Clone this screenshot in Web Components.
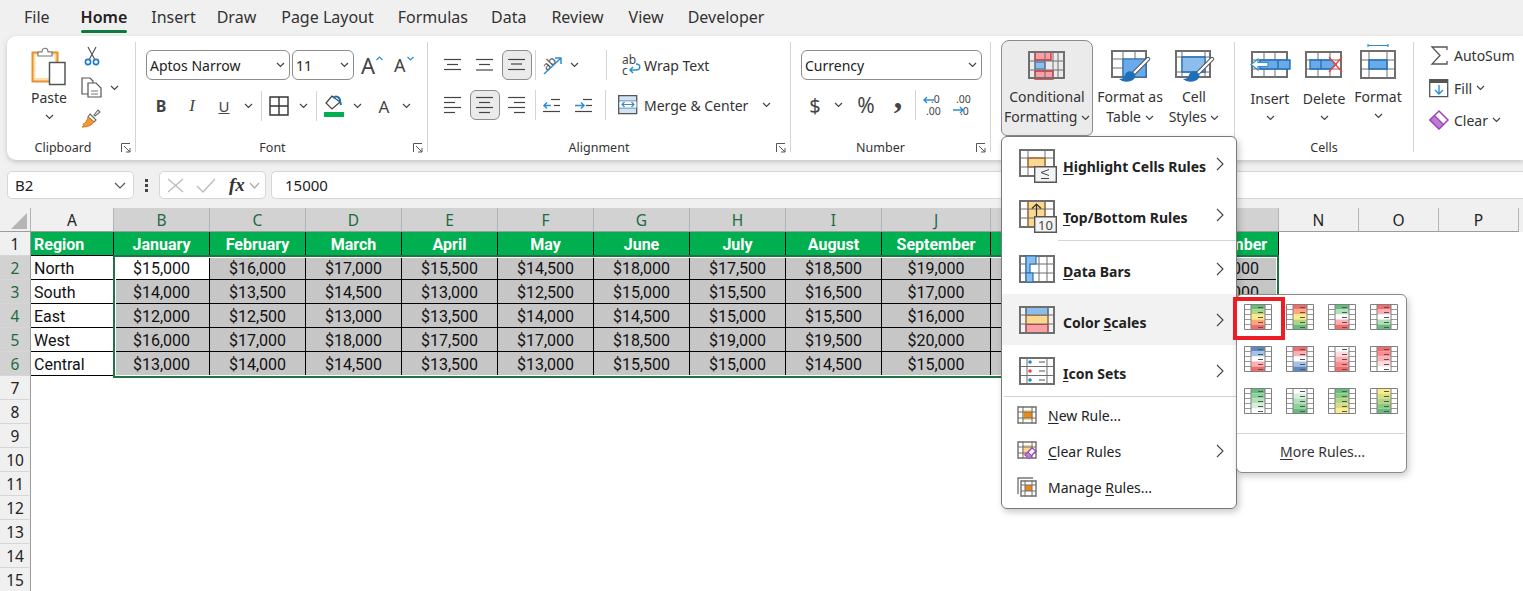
<!DOCTYPE html>
<html>
<head>
<meta charset="utf-8">
<title>Excel</title>
<style>
  html, body { margin: 0; padding: 0; }
  body {
    width: 1523px;
    height: 591px;
    overflow: hidden;
    position: relative;
    background: #f0f0f0;
    font-family: "Noto Sans", "Liberation Sans", sans-serif;
    color: #262626;
  }
</style>
</head>
<body>
<ribbon-tabs></ribbon-tabs>
<excel-ribbon></excel-ribbon>
<formula-bar></formula-bar>
<sheet-grid></sheet-grid>
<cf-menu></cf-menu>
<scale-menu></scale-menu>

<script>
const GR = '#6f6f6f';
const BL = '#1f6fb8';
const LB = '#8dbdec';

// draws a grey table: xs and ys are the line positions
function grid(xs, ys, sw = 2, col = GR) {
  const x0 = xs[0], x1 = xs[xs.length - 1], y0 = ys[0], y1 = ys[ys.length - 1];
  let s = '';
  xs.forEach(x => s += `<path d="M${x} ${y0-sw/2}V${y1+sw/2}" stroke="${col}" stroke-width="${x===x0||x===x1?sw:1}"/>`);
  ys.forEach(y => s += `<path d="M${x0} ${y}H${x1}" stroke="${col}" stroke-width="${y===y0||y===y1?sw:1}"/>`);
  return s;
}
function lines(rows, col = '#444') {
  return rows.map(r => `<path d="M${r[0]} ${r[2]}H${r[1]}" stroke="${col}" stroke-width="1.2"/>`).join('');
}
const BRUSH = `<path d="M37 9 23 23" stroke="#555" stroke-width="4.4" stroke-linecap="round"/><path d="M37 9 23 23" stroke="#fff" stroke-width="2.4" stroke-linecap="round"/>
  <path d="M22 22c-4-2-7 0-8 3-1 3-3 4-6 4 3 3 11 4 15 0 2-2 2-5-1-7z" fill="${BL}"/>`;
const ARROW_BLUE = '#2b8fd8';

const ICONS = {
  paste: [36, 40, `<path d="M1.5 6.500h25v29h-25z" fill="#fbdfae" stroke="#e8912d" stroke-width="2"/><path d="M4.500 9h19v23h-19z" fill="#fff"/>
    <path d="M7 10V6h4c0-5 6-5 6 0h4v4z" fill="#fff" stroke="#777" stroke-width="1.2"/>
    <path d="M18.500 16.500h15.500v22H18.500z" fill="#fff" stroke="#555" stroke-width="1.5"/>`],
  cut: [16, 20, `<path d="M4 1 10.500 13M12 1 5.500 13" stroke="#555" stroke-width="1.2" fill="none"/>
    <circle cx="4" cy="16" r="2.600" fill="none" stroke="#1f77c9" stroke-width="1.6"/><circle cx="12" cy="16" r="2.600" fill="none" stroke="#1f77c9" stroke-width="1.6"/>`],
  copy: [21, 21, `<path d="M1 1h8l3 3v13H1z" fill="#fff" stroke="#555" stroke-width="1.2"/>
    <path d="M7 6h8l5 5v9H7z" fill="#fff" stroke="#555" stroke-width="1.2"/><path d="M10 14h7M10 17h7" stroke="#777"/>`],
  painter: [20, 19, `<path d="M13 6 17 1l2 2-5 4z" fill="#fff" stroke="#666" stroke-width="1.1"/><path d="M9 5l6 6-2 2-6-5z" fill="#fff" stroke="#666" stroke-width="1.1"/>
    <path d="M7 8l6 5c-2 3-6 5-12 5 3-1 1-2 1-3 2 0 4-3 5-7z" fill="#f09a3a" stroke="#d9761a" stroke-width="1"/>`],
  borders: [20, 20, `<path d="M1 1h18v18H1zM10 1v18M1 10h18" fill="none" stroke="#333" stroke-width="1.4"/>`],
  fill: [21, 22, `<path d="M8 1 2 8l6 6 8-7z" fill="#fff" stroke="#444" stroke-width="1.2"/><path d="M9 3c3-3 7-1 7 3l1 4" fill="none" stroke="${BL}" stroke-width="2"/><path d="M0 17h20v5H0z" fill="#00b050"/>`],
  atop: [18, 14, lines([[0, 17, 1.5], [3, 14, 6.5], [0, 17, 11.5]])],
  amid: [18, 14, lines([[0, 17, 1.5], [3, 14, 6.5], [0, 17, 12]])],
  abot: [18, 14, lines([[0, 17, 1.5], [3, 14, 6], [0, 17, 11.5]])],
  aleft: [18, 18, lines([[0, 17, 1.5], [0, 11, 6.5], [0, 17, 11.5], [0, 11, 16.5]])],
  acenter: [18, 18, lines([[0, 17, 1.5], [3, 14, 6.5], [0, 17, 11.5], [3, 14, 16.5]])],
  aright: [18, 18, lines([[0, 17, 1.5], [6, 17, 6.5], [0, 17, 11.5], [6, 17, 16.5]])],
  orient: [22, 22, `<text x="2" y="14" transform="rotate(-45 8 11)" font-family="Noto Sans,sans-serif" font-size="12" fill="#444">ab</text><path d="M3 20 20 4M14 4h6v6" fill="none" stroke="${ARROW_BLUE}" stroke-width="1.5"/>`],
  outdent: [18, 15, lines([[8, 17, 1.5], [11, 17, 7.5], [0, 17, 13.5]]) + `<path d="M8 7.500H1M4 4.500l-3 3 3 3" fill="none" stroke="${ARROW_BLUE}" stroke-width="1.5"/>`],
  indent: [18, 15, lines([[8, 17, 1.5], [11, 17, 7.5], [0, 17, 13.5]]) + `<path d="M0 7.500h8M6 4.500l3 3-3 3" fill="none" stroke="${ARROW_BLUE}" stroke-width="1.5"/>`],
  wrap: [20, 22, `<text x="0" y="10" font-family="Noto Sans,sans-serif" font-size="12" fill="#444">ab</text><text x="0" y="21" font-family="Noto Sans,sans-serif" font-size="12" fill="#444">c</text>
    <path d="M8 16h6c5 0 5-6 0-6M11 13l-3 3 3 3" fill="none" stroke="${ARROW_BLUE}" stroke-width="1.5"/>`],
  merge: [20, 20, `<path d="M.7.7h18v18H.7z" fill="#cfe4f7" stroke="#555" stroke-width="1.3"/><path d="M1 6h18M1 13h18" stroke="#777"/><path d="M1.500 6.500h17v6h-17z" fill="#fff"/><path d="M4 9.500h12M6.500 7 4 9.500 6.500 12M13.500 7l2.500 2.500-2.500 2.500" fill="none" stroke="${ARROW_BLUE}" stroke-width="1.2"/>`],
  decinc: [20, 22, `<text x="8" y="9" font-family="Noto Sans,sans-serif" font-size="10.5" fill="#444">.0</text><text x="3" y="21" font-family="Noto Sans,sans-serif" font-size="10.5" fill="#444">.00</text><path d="M11 6H1M4 3 1 6l3 3" fill="none" stroke="${ARROW_BLUE}" stroke-width="1.4"/>`],
  decdec: [20, 22, `<text x="4" y="9" font-family="Noto Sans,sans-serif" font-size="10.5" fill="#444">.00</text><text x="8" y="21" font-family="Noto Sans,sans-serif" font-size="10.5" fill="#444">.0</text><path d="M1 16h10M8 13l3 3-3 3" fill="none" stroke="${ARROW_BLUE}" stroke-width="1.4"/>`],
  launcher: [10, 10, `<path d="M.5 9V.5H9" fill="none" stroke="#555"/><path d="M3 3l6 6M9 5v4H5" fill="none" stroke="#555"/>`],
  cf: [38, 30, `<path d="M7 2h16v8H7z" fill="#f9a0a6" stroke="#e2252b" stroke-width="1.3"/><path d="M7 12h10v7H7z" fill="${LB}" stroke="${BL}"/><path d="M7 21h18v8H7z" fill="#f9a0a6" stroke="#e2252b" stroke-width="1.3"/>` + grid([1, 7, 17, 25, 30, 36], [2, 11, 20, 28])],
  fat: [38, 34, grid([1, 12, 24, 35], [1, 9, 18, 27]) + `<path d="M12 9h23v18H12z" fill="#6aaae8" stroke="${BL}" stroke-width="1.2"/>` + BRUSH],
  cs: [38, 34, grid([1, 7, 30, 35], [1, 7, 22, 27]) + `<path d="M7 7h23v15H7z" fill="${LB}" stroke="${BL}" stroke-width="1.3"/>` + BRUSH],
  ins: [40, 28, grid([2, 14, 25, 37], [2, 10, 19, 27]) + `<path d="M10 10h30v9H10z" fill="#6aaae8" stroke="${BL}" stroke-width="1.4"/><path d="M28 10v9" stroke="${BL}" stroke-width="1.4"/><path d="M18 12.500H8V9L1 14.500 8 20v-3.500h10z" fill="#fff" stroke="${ARROW_BLUE}" stroke-width="1.2"/>`],
  del: [38, 28, grid([1, 13, 25, 36], [2, 10, 19, 27]) + `<path d="M5 10h21l5 4.500-5 4.500H5z" fill="#6aaae8" stroke="${BL}" stroke-width="1.3"/><path d="M16 10v9" stroke="${BL}" stroke-width="1.3"/><path d="M24 7l13 15M37 7 24 22" stroke="#f0453e" stroke-width="1.4"/>`],
  fmt: [36, 36, `<path d="M8 1v3M28 1v3M8 2.500h20" stroke="${ARROW_BLUE}" stroke-width="1.2"/>` + grid([1, 9, 27, 35], [8, 17, 26, 35]) + `<path d="M9 17h18v9H9z" fill="#6aaae8" stroke="${BL}" stroke-width="1.4"/>`],
  sigma: [17, 19, `<path d="M16 4V1H1l8 8.500L1 18h15v-3" fill="none" stroke="#555" stroke-width="1.3"/>`],
  fillbox: [20, 19, `<path d="M.7.7h18v17H.7z" fill="#fff" stroke="#555" stroke-width="1.3"/><path d="M1 2.500h18" stroke="#555" stroke-width="3"/><path d="M10 6v9M6 11l4 4 4-4" fill="none" stroke="${ARROW_BLUE}" stroke-width="1.4"/>`],
  eraser: [20, 20, `<path d="M10 1l9 9-9 9-9-9z" fill="#fff" stroke="#9a46b8" stroke-width="1.5"/><path d="M5.500 5.500l9 9L10 19l-9-9z" fill="#c07ad8" stroke="#9a46b8" stroke-width="1.2"/>`],
  highlight: [38, 34, `<path d="M9 9h17v9H9z" fill="#fad88f" stroke="#e07a10" stroke-width="1.4"/>` + grid([1, 9, 26, 35], [1, 9, 18, 27]) + `<path d="M15.700 17.700h21.600v15.600H15.700z" fill="#f3f3f3" stroke="#555" stroke-width="1.4"/><path d="M30 20.500l-8 3 8 3M22 29.500h8" fill="none" stroke="#444" stroke-width="1"/>`],
  topbottom: [38, 34, `<path d="M9 1h17v26H9z" fill="#fad88f" stroke="#e07a10" stroke-width="1.4"/>` + grid([1, 9, 26, 35], [1, 9, 18, 27]) + `<path d="M17.500 16V4M13 8.500 17.500 4 22 8.500" fill="none" stroke="#333" stroke-width="1.2"/><path d="M15.700 16.700h21.600v15.600H15.700z" fill="#f3f3f3" stroke="#555" stroke-width="1.4"/><text x="19" y="30" font-family="Noto Sans,sans-serif" font-size="13" fill="#444">10</text>`],
  databars: [36, 28, grid([1, 7, 20, 28, 35], [1, 9, 18, 27]) + `<path d="M7 1h10v8H11v9h-4z" fill="${LB}" stroke="${BL}" stroke-width="1.2"/><path d="M7 18h7v9H7z" fill="${LB}" stroke="${BL}" stroke-width="1.2"/>`],
  scales: [36, 28, `<path d="M7 1h22v8.500H7z" fill="${LB}" stroke="${BL}" stroke-width="1.2"/><path d="M7 9.500h22v9H7z" fill="#fad88f" stroke="#e07a10" stroke-width="1.2"/><path d="M7 18.500h22V27H7z" fill="#f9a0a6" stroke="#e2252b" stroke-width="1.2"/>` + grid([1, 7, 29, 35], [1, 9, 18, 27])],
  iconsets: [36, 28, grid([1, 8, 28, 35], [1, 9.5, 18.5, 27]) + `<circle cx="11" cy="5" r="1.8" fill="#1e88d9"/><circle cx="11" cy="14" r="1.8" fill="#f0453e"/><circle cx="11" cy="23" r="1.8" fill="#1e88d9"/><path d="M20 5h6M20 14h6M20 23h6" stroke="#555" stroke-width="1.2"/>`],
  newrule: [20, 18, `<path d="M5 4h11v10H5z" fill="#fad88f"/><path d="M7 6h8v6H7z" fill="#e8891c"/>` + grid([1, 6, 15, 19], [1, 6, 12, 17], 1.4)],
  clearrule: [21, 20, `<path d="M5 4h11v10H5z" fill="#fad88f"/>` + grid([1, 6, 15, 19], [1, 6, 12, 17], 1.4) + `<path d="M8 14l7-7 4 3-7 7z" fill="#fff" stroke="#9a46b8" stroke-width="1.4"/><path d="M8 14l3-3 4 4-3 3z" fill="#c07ad8" stroke="#9a46b8"/>`],
  manage: [20, 20, `<path d="M1 17V1h15" fill="none" stroke="#777" stroke-width="1.4"/><path d="M8 8h7v6H8z" fill="#e8891c"/>` + grid([4, 8, 15, 19], [4, 8, 14, 19], 1.4)]
};

class XIcon extends HTMLElement {
  connectedCallback() {
    const [w, h, body] = ICONS[this.getAttribute('name')];
    const root = this.shadowRoot || this.attachShadow({ mode: 'open' });
    root.innerHTML = `<style>:host{display:block;flex:none;line-height:0}</style>
      <svg width="${w}" height="${h}" viewBox="0 0 ${w} ${h}" fill="none" style="overflow:visible">${body}</svg>`;
  }
}
customElements.define('x-icon', XIcon);

class XChev extends HTMLElement {
  connectedCallback() {
    const root = this.shadowRoot || this.attachShadow({ mode: 'open' });
    root.innerHTML = `<style>:host{display:inline-block;flex:none;line-height:0;vertical-align:middle}</style>
      <svg width="9" height="6" viewBox="0 0 9 6"><path d="M1 1l3.500 3.500L8 1" fill="none" stroke="#444" stroke-width="1.2"/></svg>`;
  }
}
customElements.define('x-chev', XChev);

class RibbonTabs extends HTMLElement {
  connectedCallback() {
    const tabs = [['File', 24], ['Home', 31], ['Insert', 24], ['Draw', 21], ['Page Layout', 25], ['Formulas', 24], ['Data', 23], ['Review', 25], ['View', 25], ['Developer', 24]];
    const root = this.attachShadow({ mode: 'open' });
    root.innerHTML = `<style>
      :host { display: flex; height: 36px; font-size: 16px; color: #333; }
      span { line-height: 35px; height: 36px; box-sizing: border-box; white-space: nowrap; }
      .on { font-weight: 600; color: #222; position: relative; }
      .on::after { content: ""; position: absolute; left: 0; right: 0; bottom: 3px; height: 3px; background: #0e7a41; border-radius: 2px; }
    </style>` + tabs.map(t => `<span class="${t[0] === 'Home' ? 'on' : ''}" style="margin-left:${t[1]}px">${t[0]}</span>`).join('');
  }
}
customElements.define('ribbon-tabs', RibbonTabs);

class RibGroup extends HTMLElement {
  connectedCallback() {
    const root = this.attachShadow({ mode: 'open' });
    const launcher = this.hasAttribute('launcher') ? '<x-icon name="launcher"></x-icon>' : '';
    root.innerHTML = `<style>
      :host { display: flex; flex-direction: column; flex: none; box-sizing: border-box; height: 110px; margin-top: 6px; border-right: 1px solid #d4d4d4; }
      :host([plain]) { border-right: 0; }
      .body { height: 96px; flex: none; }
      .foot { height: 14px; flex: none; padding-top: 2px; display: flex; align-items: center; font-size: 12.5px; color: #333; position: relative; }
      .foot span { flex: 1; text-align: center; }
      x-icon { position: absolute; right: 4px; top: 5px; }
    </style>
    <div class="body"><slot></slot></div>
    <div class="foot"><span style="padding-right:${this.getAttribute('shift') || 0}px">${this.getAttribute('label') || ''}</span>${launcher}</div>`;
  }
}
customElements.define('rib-group', RibGroup);

class ExcelRibbon extends HTMLElement {
  connectedCallback() {
    const root = this.attachShadow({ mode: 'open' });
    root.innerHTML = `<style>
      :host { display: flex; width: 1516px; height: 124px; margin-left: 7px; background: #fff; border-radius: 9px 0 0 9px; box-shadow: 0 2px 5px rgba(0,0,0,.18); font-size: 14px; color: #333; }
      rib-group { font-size: 14px; }
      .row { display: flex; align-items: center; }
      .col { display: flex; flex-direction: column; align-items: center; }
      .combo { display: flex; align-items: center; justify-content: space-between; box-sizing: border-box; height: 30px; border: 1px solid #8c8c8c; border-radius: 6px; padding: 0 4px 0 3px; color: #222; font-size: 14px; }
      .tb { display: flex; align-items: center; justify-content: center; flex: none; box-sizing: border-box; width: 30px; height: 30px; }
      .tb.on { background: #ebebeb; border: 1px solid #8c8c8c; border-radius: 6px; }
      .vs { width: 1px; height: 30px; background: #d4d4d4; flex: none; }
      .cbtn { display: flex; flex-direction: column; align-items: center; text-align: center; line-height: 20px; white-space: nowrap; }
      .cfb { box-sizing: border-box; width: 92px; height: 96px; background: #ebebeb; border: 1px solid #8c8c8c; border-radius: 8px 8px 6px 6px; padding-top: 9px; margin-top: -2px; }
      .glyph { font-family: "Noto Sans", sans-serif; color: #444; }
    </style>

    <rib-group label="Clipboard" launcher style="width:129px" shift="16">
      <div class="row" style="align-items:flex-start;padding-left:20px">
        <div class="col" style="width:44px;padding-top:4px;margin-right:4px">
          <x-icon name="paste"></x-icon>
          <span style="line-height:20px;margin-top:2px">Paste</span>
          <x-chev style="margin-top:6px"></x-chev>
        </div>
        <div class="col" style="align-items:flex-start;padding-top:4px;margin-left:6px">
          <x-icon name="cut" style="margin-left:3px"></x-icon>
          <div class="row" style="margin-top:11px"><x-icon name="copy"></x-icon><x-chev style="margin-left:8px"></x-chev></div>
          <x-icon name="painter" style="margin-top:11px"></x-icon>
        </div>
      </div>
    </rib-group>

    <rib-group label="Font" launcher shift="28" style="width:292px;padding-left:10px">
      <div class="row" style="margin-top:8px">
        <div class="combo" style="width:144px">Aptos Narrow<x-chev></x-chev></div>
        <div class="combo" style="width:62px;margin-left:2px">11<x-chev></x-chev></div>
        <span class="glyph" style="font-size:22px;margin-left:7px;line-height:30px">A</span>
        <svg width="7" height="5" viewBox="0 0 7 5" style="margin:0 0 14px 1px"><path d="M.5 4 3.500 1l3 3" fill="none" stroke="#2b8fd8" stroke-width="1.2"/></svg>
        <span class="glyph" style="font-size:18px;margin-left:11px;line-height:30px">A</span>
        <svg width="7" height="5" viewBox="0 0 7 5" style="margin:0 0 14px 1px"><path d="M.5 1l3 3 3-3" fill="none" stroke="#2b8fd8" stroke-width="1.2"/></svg>
      </div>
      <div class="row" style="margin-top:11px;height:30px">
        <span class="glyph" style="font-weight:700;font-size:16px;margin-left:5px;width:20px;text-align:center">B</span>
        <span style="font-family:'Liberation Serif',serif;font-style:italic;font-size:17px;color:#444;width:20px;text-align:center;margin-left:11px">I</span>
        <span class="glyph" style="font-size:15px;width:20px;text-align:center;margin-left:12px;text-decoration:underline">U</span>
        <x-chev style="margin-left:10px"></x-chev>
        <div class="vs" style="margin-left:8px"></div>
        <x-icon name="borders" style="margin-left:7px"></x-icon>
        <x-chev style="margin-left:10px"></x-chev>
        <div class="vs" style="margin-left:8px"></div>
        <x-icon name="fill" style="margin-left:7px"></x-icon>
        <x-chev style="margin-left:8px"></x-chev>
        <span class="glyph" style="font-size:17px;margin-left:15px;width:14px;text-align:center">A</span>
        <x-chev style="margin-left:11px"></x-chev>
      </div>
    </rib-group>

    <rib-group label="Alignment" launcher shift="20" style="width:363px">
      <div class="row" style="margin-top:8px;height:30px;padding-left:10px">
        <div class="tb" style="margin-right:2px"><x-icon name="atop"></x-icon></div>
        <div class="tb" style="margin-right:2px"><x-icon name="amid"></x-icon></div>
        <div class="tb on"><x-icon name="abot"></x-icon></div>
        <div class="vs" style="margin-left:3px"></div>
        <x-icon name="orient" style="margin-left:5px"></x-icon>
        <x-chev style="margin-left:7px"></x-chev>
        <div class="vs" style="margin-left:27px;height:30px"></div>
        <x-icon name="wrap" style="margin-left:15px"></x-icon>
        <span style="margin-left:2px">Wrap Text</span>
      </div>
      <div class="row" style="margin-top:10px;height:30px;padding-left:10px">
        <div class="tb" style="margin-right:2px"><x-icon name="aleft"></x-icon></div>
        <div class="tb on" style="margin-right:2px"><x-icon name="acenter"></x-icon></div>
        <div class="tb"><x-icon name="aright"></x-icon></div>
        <div class="vs" style="margin-left:3px"></div>
        <div class="tb" style="margin-left:1px"><x-icon name="outdent"></x-icon></div>
        <div class="tb" style="margin-left:2px"><x-icon name="indent"></x-icon></div>
        <div class="vs" style="margin-left:6px"></div>
        <x-icon name="merge" style="margin-left:12px"></x-icon>
        <span style="margin-left:6px">Merge &amp; Center</span>
        <x-chev style="margin-left:14px"></x-chev>
      </div>
    </rib-group>

    <rib-group label="Number" launcher shift="30" style="width:200px;padding-left:10px">
      <div class="row" style="margin-top:8px">
        <div class="combo" style="width:181px">Currency<x-chev></x-chev></div>
      </div>
      <div class="row" style="margin-top:10px;height:30px">
        <span class="glyph" style="font-size:20px;margin-left:7px;width:14px;text-align:center">$</span>
        <x-chev style="margin-left:12px"></x-chev>
        <span class="glyph" style="font-size:21px;margin-left:12px;width:22px;text-align:center">%</span>
        <span style="font-family:'Liberation Serif',serif;font-weight:700;font-size:34px;color:#444;margin-left:15px;width:12px;text-align:center;line-height:20px;margin-top:-16px">,</span>
        <div class="vs" style="margin-left:11px"></div>
        <x-icon name="decinc" style="margin-left:7px"></x-icon>
        <x-icon name="decdec" style="margin-left:9px"></x-icon>
      </div>
    </rib-group>

    <rib-group style="width:244px">
      <div class="row" style="align-items:flex-start;padding-left:10px">
        <div class="cbtn cfb">
          <x-icon name="cf" style="margin-bottom:7px"></x-icon>
          <span>Conditional</span><span>Formatting <x-chev></x-chev></span>
        </div>
        <div class="cbtn" style="width:74px;padding-top:8px">
          <x-icon name="fat" style="margin-bottom:3px"></x-icon>
          <span>Format as</span><span>Table <x-chev></x-chev></span>
        </div>
        <div class="cbtn" style="width:58px;margin-left:-2px;padding-top:8px">
          <x-icon name="cs" style="margin-bottom:3px"></x-icon>
          <span>Cell</span><span>Styles <x-chev></x-chev></span>
        </div>
      </div>
    </rib-group>

    <rib-group label="Cells" style="width:179px">
      <div class="row" style="align-items:flex-start;padding-left:8px">
        <div class="cbtn" style="width:54px;padding-top:8px">
          <x-icon name="ins" style="margin-bottom:11px"></x-icon>
          <span>Insert</span><x-chev style="margin-top:6px"></x-chev>
        </div>
        <div class="cbtn" style="width:54px;padding-top:8px">
          <x-icon name="del" style="margin-bottom:11px"></x-icon>
          <span>Delete</span><x-chev style="margin-top:6px"></x-chev>
        </div>
        <div class="cbtn" style="width:54px;padding-top:1px">
          <x-icon name="fmt" style="margin-bottom:8px"></x-icon>
          <span>Format</span><x-chev style="margin-top:6px"></x-chev>
        </div>
      </div>
    </rib-group>

    <rib-group plain style="width:109px;padding-left:15px">
      <div class="row" style="height:20px;margin-top:3px"><x-icon name="sigma" style="margin:0 6px 0 2px"></x-icon><span>AutoSum</span></div>
      <div class="row" style="height:20px;margin-top:13px"><x-icon name="fillbox" style="margin-right:5px"></x-icon><span>Fill</span><x-chev style="margin-left:4px"></x-chev></div>
      <div class="row" style="height:20px;margin-top:12px"><x-icon name="eraser" style="margin-right:5px"></x-icon><span>Clear</span><x-chev style="margin-left:4px"></x-chev></div>
    </rib-group>`;
  }
}
customElements.define('excel-ribbon', ExcelRibbon);

class FormulaBar extends HTMLElement {
  connectedCallback() {
    const root = this.attachShadow({ mode: 'open' });
    root.innerHTML = `<style>
      :host { display: flex; align-items: stretch; height: 28px; margin: 11px 0 9px 7px; width: 1516px; font-size: 15px; color: #222; }
      .box { display: flex; align-items: center; box-sizing: border-box; background: #fff; border: 1px solid #d6d6d6; border-radius: 5px; }
      .name { width: 127px; padding: 0 7px; justify-content: space-between; }
      .dots { width: 25px; display: flex; flex-direction: column; align-items: center; justify-content: center; gap: 2px; }
      .dots i { width: 3px; height: 3px; background: #444; }
      .fx { width: 107px; padding-left: 7px; }
      .val { flex: 1; margin-left: 5px; padding-left: 13px; border-right: 0; border-radius: 5px 0 0 5px; }
      em { font-family: "Liberation Serif", serif; font-weight: 700; font-size: 19px; color: #333; margin-left: 13px; }
    </style>
    <div class="box name"><span>B2</span><svg width="12" height="7" viewBox="0 0 12 7"><path d="M1 1l5 5 5-5" fill="none" stroke="#555" stroke-width="1.2"/></svg></div>
    <div class="dots"><i></i><i></i><i></i></div>
    <div class="box fx">
      <svg width="17" height="15" viewBox="0 0 17 15"><path d="M1 1l15 13M16 1 1 14" stroke="#bbb" stroke-width="1.3"/></svg>
      <svg width="20" height="15" viewBox="0 0 20 15" style="margin-left:12px"><path d="M1 8l6 6L19 1" fill="none" stroke="#bbb" stroke-width="1.3"/></svg>
      <em>fx</em>
      <svg width="11" height="7" viewBox="0 0 11 7" style="margin-left:4px"><path d="M1 1l4.500 5L10 1" fill="none" stroke="#aaa" stroke-width="1.2"/></svg>
    </div>
    <div class="box val">15000</div>`;
  }
}
customElements.define('formula-bar', FormulaBar);

const SHEET = [
  ['Region', 'January', 'February', 'March', 'April', 'May', 'June', 'July', 'August', 'September', '', '', 'December'],
  ['North', 15000, 16000, 17000, 15500, 14500, 18000, 17500, 18500, 19000, '', '', 20000],
  ['South', 14000, 13500, 14500, 13000, 12500, 15000, 15500, 16500, 17000, '', '', 18000],
  ['East', 12000, 12500, 13000, 13500, 14000, 14500, 15000, 15500, 16000, '', '', 17000],
  ['West', 16000, 17000, 18000, 17500, 17000, 18500, 19000, 19500, 20000, '', '', 21000],
  ['Central', 13000, 14000, 14500, 13500, 13000, 15500, 15000, 14500, 15000, '', '', 16000]
];

class SheetGrid extends HTMLElement {
  connectedCallback() {
    const letters = 'ABCDEFGHIJKLMNOP'.split('');
    const widths = [83, 96, 96, 96, 96, 96, 96, 96, 96, 109, 96, 96, 96, 80, 80, 80];
    const COLS = widths.length + 2;
    let cells = `<div class="hd corner"><svg width="16" height="16" viewBox="0 0 16 16"><path d="M16 0v16H0z" fill="#b5b5b5"/></svg></div>`;
    letters.forEach((l, i) => {
      const sel = i >= 1 && i <= 12;
      cells += `<div class="hd col ${sel ? 'sel' : ''}">${l}</div>`;
    });
    cells += '<div class="hd"></div>';
    for (let r = 0; r < 15; r++) {
      const sel = r >= 1 && r <= 5;
      cells += `<div class="hd rowh ${sel ? 'sel' : ''}">${r + 1}</div>`;
      const row = SHEET[r];
      for (let c = 0; c < 16; c++) {
        if (!row || c > 12) { cells += '<div></div>'; continue; }
        const v = row[c];
        const txt = typeof v === 'number' ? '$' + v.toLocaleString('en-US') : v;
        let cls = 't';
        if (r === 0) cls += ' head';
        if (c > 0) cls += ' mid';
        if (r > 0 && c > 0 && !(r === 1 && c === 1)) cls += ' gray';
        cells += `<div class="${cls}">${txt}</div>`;
      }
      cells += '<div></div>';
    }
    const root = this.attachShadow({ mode: 'open' });
    root.innerHTML = `<style>
      :host { display: grid; width: 1523px; background: #fff;
        grid-template-columns: 31px ${widths.map(w => w + 'px').join(' ')} 4px;
        grid-auto-rows: 24px; font-family: Roboto, "Liberation Sans", sans-serif; font-size: 16px; color: #111; }
      .hd { box-sizing: border-box; display: flex; align-items: center; justify-content: center; background: #f0f0f0; color: #222; font-family: "Noto Sans", sans-serif; font-size: 15.5px; }
      .col { border-right: 1px solid #b4b4b4; border-bottom: 1px solid #9c9c9c; }
      .rowh { border-right: 1px solid #9c9c9c; border-bottom: 1px solid #d6d6d6; padding-top: 1px; }
      .corner { border-right: 1px solid #b4b4b4; border-bottom: 1px solid #9c9c9c; justify-content: flex-end; align-items: flex-end; padding: 0 3px 2px 0; }
      .sel { background: #d2d2d2; color: #1d6b41; }
      .t { box-sizing: border-box; border-right: 1px solid #000; border-bottom: 1px solid #000; line-height: 25px; padding-left: 3px; white-space: nowrap; overflow: hidden; }
      .mid { text-align: center; padding-left: 0; }
      .head { background: #00b050; color: #fff; font-weight: 700; }
      .gray { background: #c6c6c6; }
      .select { grid-column: 3 / 15; grid-row: 3 / 8; margin: -1px 0 -2px -1px; box-sizing: border-box; border: 2px solid #217346; box-shadow: inset 0 0 0 1px #fff; pointer-events: none; background: none; }
    </style>${cells}<div class="select"></div>`;
    // every cell gets its place, so the selection box can lie over them in the same grid
    [...root.children].filter(e => e.tagName === 'DIV' && !e.classList.contains('select')).forEach((e, i) => {
      e.style.gridRow = Math.floor(i / COLS) + 1;
      e.style.gridColumn = (i % COLS) + 1;
    });
  }
}
customElements.define('sheet-grid', SheetGrid);

class CfItem extends HTMLElement {
  connectedCallback() {
    const big = this.hasAttribute('big');
    const root = this.attachShadow({ mode: 'open' });
    root.innerHTML = `<style>
      :host { display: flex; align-items: center; box-sizing: border-box; height: ${big ? 51 : 36}px; padding-left: ${big ? 17 : 15}px; color: #222; white-space: nowrap; }
      :host([hot]) { background: #f2f2f2; }
      .ico { width: ${big ? 44 : 31}px; flex: none; padding-top: var(--ip, 0); }
      .txt { flex: 1; font-size: 14px; font-weight: ${big ? 700 : 400}; padding-top: ${big ? 5 : 0}px; }
      svg { margin-right: 12px; }
    </style>
    <div class="ico"><x-icon name="${this.getAttribute('icon')}"></x-icon></div>
    <div class="txt"><slot></slot></div>
    ${this.hasAttribute('sub') ? '<svg width="8" height="14" viewBox="0 0 8 14"><path d="M1 1l6 6-6 6" fill="none" stroke="#444" stroke-width="1.1"/></svg>' : ''}`;
  }
}
customElements.define('cf-item', CfItem);

class CfMenu extends HTMLElement {
  connectedCallback() {
    const root = this.attachShadow({ mode: 'open' });
    root.innerHTML = `<style>
      :host { position: absolute; left: 1001px; top: 136px; width: 236px; height: 373px; box-sizing: border-box; background: #fff; border: 1px solid #7a7a7a; border-radius: 6px; box-shadow: 2px 3px 7px rgba(0,0,0,.22); padding-top: 1px; z-index: 5; overflow: hidden; }
      .sep { height: 1px; background: #d4d4d4; }
      u { text-underline-offset: 2px; }
    </style>
    <cf-item big sub icon="highlight" style="--ip:5px"><u>H</u>ighlight Cells Rules</cf-item>
    <cf-item big sub icon="topbottom" style="--ip:4px"><u>T</u>op/Bottom Rules</cf-item>
    <div class="sep" style="margin:0 0 2px 56px"></div>
    <cf-item big sub icon="databars"><u>D</u>ata Bars</cf-item>
    <cf-item big sub hot icon="scales">Color <u>S</u>cales</cf-item>
    <cf-item big sub icon="iconsets"><u>I</u>con Sets</cf-item>
    <div class="sep" style="margin:0 0 0 2px"></div>
    <cf-item icon="newrule"><u>N</u>ew Rule...</cf-item>
    <cf-item sub icon="clearrule"><u>C</u>lear Rules</cf-item>
    <cf-item icon="manage">Manage <u>R</u>ules...</cf-item>`;
  }
}
customElements.define('cf-menu', CfMenu);

const SCALES = [
  ['#63be7b', '#b1d580', '#ffeb84', '#fbaa77', '#f8696b'],
  ['#f8696b', '#fbaa77', '#ffeb84', '#b1d580', '#63be7b'],
  ['#63be7b', '#b1dfb9', '#ffffff', '#fcb0b3', '#f8696b'],
  ['#f8696b', '#fcb0b3', '#ffffff', '#b1dfb9', '#63be7b'],
  ['#5a8ac6', '#a7c0e3', '#ffffff', '#fcb0b3', '#f8696b'],
  ['#f8696b', '#fcb0b3', '#ffffff', '#a7c0e3', '#5a8ac6'],
  ['#ffffff', '#fcdcdd', '#fcb0b3', '#fb8b8d', '#f8696b'],
  ['#f8696b', '#fb8b8d', '#fcb0b3', '#fcdcdd', '#ffffff'],
  ['#63be7b', '#8fcf9e', '#b1dfb9', '#d6eedc', '#ffffff'],
  ['#ffffff', '#d6eedc', '#b1dfb9', '#8fcf9e', '#63be7b'],
  ['#63be7b', '#8cc97e', '#b1d580', '#d7e081', '#ffeb84'],
  ['#ffeb84', '#d7e081', '#b1d580', '#8cc97e', '#63be7b']
];

function scaleSvg(cols) {
  let s = '';
  cols.forEach((c, i) => {
    const y = 0.5 + i * 5;
    s += `<path d="M7 ${y}h14v5H7z" fill="${c}"/><path d="M14 ${y + 3}h5" stroke="#555" stroke-width="1"/>`;
  });
  for (let i = 1; i < 5; i++) s += `<path d="M0 ${0.5 + i * 5}h7M21 ${0.5 + i * 5}h7" stroke="#999" stroke-width="1"/>`;
  s += `<path d="M.5.5h27v25H.5zM7 .5v25M21 .5v25" fill="none" stroke="#808080" stroke-width="1"/>`;
  return `<svg width="28" height="26" viewBox="0 0 28 26">${s}</svg>`;
}

class ScaleMenu extends HTMLElement {
  connectedCallback() {
    const root = this.attachShadow({ mode: 'open' });
    root.innerHTML = `<style>
      :host { position: absolute; left: 1236px; top: 294px; width: 171px; height: 179px; box-sizing: border-box; background: #fff; border: 1px solid #8a8a8a; border-radius: 6px; box-shadow: 2px 3px 7px rgba(0,0,0,.2); z-index: 6; display: flex; flex-direction: column; color: #333; font-size: 14px; }
      .grid { display: grid; grid-template-columns: repeat(4, 28px); grid-auto-rows: 26px; align-content: start; column-gap: 14px; row-gap: 16px; padding: 9px 0 0 7px; height: 127px; box-sizing: border-box; }
      svg { display: block; }
      .sep { height: 1px; background: #d4d4d4; margin: 11px 1px 0 0; }
      .more { flex: 1; display: flex; align-items: center; justify-content: center; padding: 0 0 3px 2px; }
      .mark { position: absolute; left: -4px; top: 2px; width: 52px; height: 43px; box-sizing: border-box; border: 4px solid #ee1c25; }
      u { text-underline-offset: 2px; }
    </style>
    <div class="grid">${SCALES.map(scaleSvg).join('')}</div>
    <div class="sep"></div>
    <div class="more"><span><u>M</u>ore Rules...</span></div>
    <div class="mark"></div>`;
  }
}
customElements.define('scale-menu', ScaleMenu);
</script>
</body>
</html>
